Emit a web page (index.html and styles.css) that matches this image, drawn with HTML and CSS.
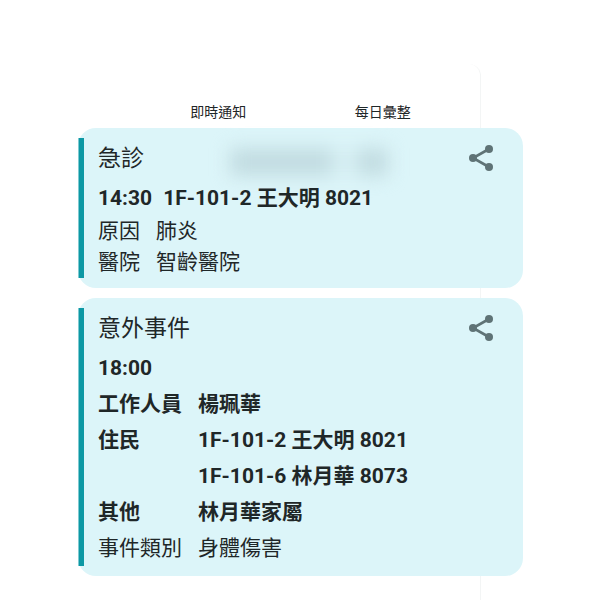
FILE: index.html
```html
<!DOCTYPE html>
<html lang="zh-Hant">
<head>
<meta charset="utf-8">
<title>即時通知</title>
<link rel="stylesheet" href="styles.css">
</head>
<body>
<main class="page">
  <nav class="tabs">
    <a href="#now">即時通知</a>
    <a href="#daily">每日彙整</a>
  </nav>
  <article class="card smudged" id="now">
    <header class="head">
      <h2>急診</h2>
      <button class="share" aria-label="分享"><svg viewBox="0 0 32 32"><path d="M24 7 8 16l16 9"/><circle cx="24" cy="7" r="4"/><circle cx="8" cy="16" r="4"/><circle cx="24" cy="25" r="4"/></svg></button>
    </header>
    <p class="summary"><time>14:30</time><span>1F-101-2 王大明 8021</span></p>
    <dl class="facts compact">
      <dt>原因</dt><dd>肺炎</dd>
      <dt>醫院</dt><dd>智齡醫院</dd>
    </dl>
  </article>
  <article class="card" id="daily">
    <header class="head">
      <h2>意外事件</h2>
      <button class="share" aria-label="分享"><svg viewBox="0 0 32 32"><path d="M24 7 8 16l16 9"/><circle cx="24" cy="7" r="4"/><circle cx="8" cy="16" r="4"/><circle cx="24" cy="25" r="4"/></svg></button>
    </header>
    <p class="summary"><time>18:00</time></p>
    <dl class="facts">
      <dt class="strong">工作人員</dt><dd class="strong">楊珮華</dd>
      <dt class="strong">住民</dt><dd class="strong">1F-101-2 王大明 8021</dd>
      <dd class="strong">1F-101-6 林月華 8073</dd>
      <dt class="strong">其他</dt><dd class="strong">林月華家屬</dd>
      <dt>事件類別</dt><dd>身體傷害</dd>
    </dl>
  </article>
</main>
</body>
</html>
```
FILE: styles.css
```css
* { box-sizing: border-box; }

body {
  margin: 0;
  background: #fff;
  color: #1f2728;
  font-family: Roboto, "Noto Sans CJK TC", sans-serif;
  font-size: 21px;
}

.page {
  padding: 96px 77px 24px 78px;
}

/* Edge of the panel behind the cards */
.page::before {
  content: "";
  position: absolute;
  top: 64px;
  bottom: 0;
  right: 119px;
  width: 24px;
  border-right: 1px solid #f3f5f5;
  border-top-right-radius: 12px;
}

.tabs {
  display: grid;
  grid-template-columns: 1fr 1fr;
  padding: 0 58px;
  height: 32px;
  line-height: 32px;
  text-align: center;
  font-size: 14px;
}

.tabs a {
  color: inherit;
  text-decoration: none;
}

.card {
  position: relative;
  isolation: isolate;
  padding: 10px 26px 10px 20px;
  border-radius: 18px;
  background: #dcf5f9;
}

.card + .card { margin-top: 10px; }

.card::before {
  content: "";
  position: absolute;
  left: 0;
  top: 10px;
  bottom: 10px;
  width: 5px;
  background: #0c98a4;
  border-left: 1px solid #7fcbd2;
}

.smudged::after {
  content: "";
  position: absolute;
  z-index: -1;
  left: 152px;
  top: 20px;
  width: 158px;
  height: 28px;
  background: linear-gradient(90deg, #c2dce1 102px, #d6eff3 102px 128px, #c2dce1 128px);
  filter: blur(9px);
}

.head {
  display: flex;
  justify-content: space-between;
  align-items: flex-start;
  height: 42px;
}

h2 {
  margin: 0;
  font-size: 23px;
  line-height: 42px;
  font-weight: 400;
}

.share {
  width: 32px;
  height: 32px;
  margin-top: 4px;
  padding: 0;
  border: 0;
  background: none;
}

.share svg {
  display: block;
  width: 32px;
  height: 32px;
  fill: #5f7376;
}

.share path {
  fill: none;
  stroke: #5f7376;
  stroke-width: 2.6;
}

.summary {
  display: flex;
  gap: 11px;
  margin: 0;
  line-height: 36px;
  font-weight: 700;
}

.facts {
  display: grid;
  grid-template-columns: 100px 1fr;
  margin: 0;
  line-height: 36px;
}

.compact {
  grid-template-columns: 58px 1fr;
  line-height: 31px;
}

dd {
  grid-column: 2;
  margin: 0;
}

.strong { font-weight: 700; }
```
